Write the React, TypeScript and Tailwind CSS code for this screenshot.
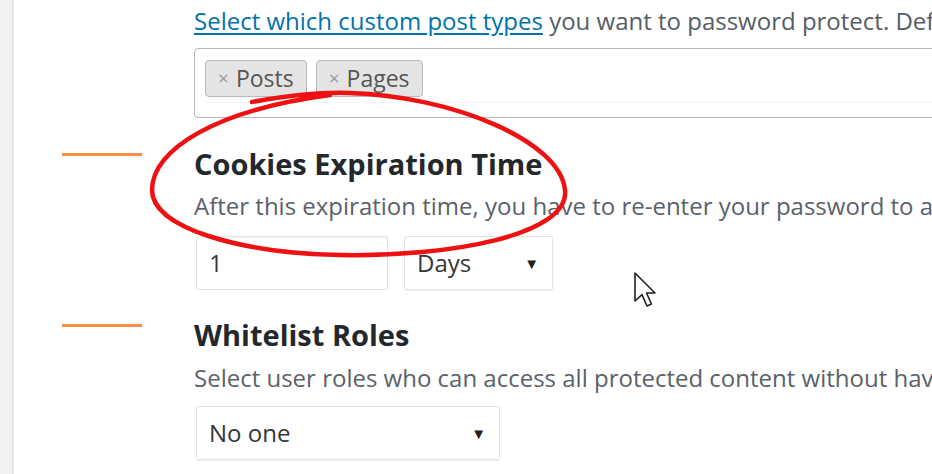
import React from 'react';

const font = { fontFamily: '"Open Sans", "Noto Sans", Arial, sans-serif' };

function OrangeMark(): React.ReactElement {
  return (
    <div className="w-[180px] shrink-0 pt-[6px]">
      <div className="ml-[48px] w-[80px] h-[3px] bg-[#f79046]" />
    </div>
  );
}

function Tag({ label }: { label: string }): React.ReactElement {
  return (
    <div className="h-[37px] flex items-center gap-[7px] px-[12px] rounded-[4px] border border-[#b9b9b9] bg-[#e4e4e4] text-[23px] text-[#555]">
      <span className="text-[#999] text-[19px]">×</span>
      <span>{label}</span>
    </div>
  );
}

function SelectBox({ label, width }: { label: string; width: string }): React.ReactElement {
  return (
    <div
      className={`h-[54px] flex items-center justify-between pl-[12px] pr-[13px] border border-[#e3e3e3] rounded-[2px] shadow-[0_1px_2px_rgba(0,0,0,0.06)] text-[24px] text-[#32373c] ${width}`}
    >
      <span>{label}</span>
      <span className="text-[15px] text-[#222]">▼</span>
    </div>
  );
}

export default function App(): React.ReactElement {
  return (
    <div style={font} className="relative w-[932px] h-[474px] overflow-hidden bg-white flex">
      <div className="w-[14px] shrink-0 bg-[#f1f1f1] border-r-2 border-[#e4e5e8]" />
      <div className="flex-1 whitespace-nowrap">
        <div className="pl-[180px]">
          <div className="mt-[6px] h-[30px] leading-[30px] text-[24px] text-[#555d66]">
            <span className="text-[#0073aa] underline underline-offset-[3px]">Select which custom post types</span>{' '}
            you want to password protect. Default: Pages
          </div>
          <div className="mt-[12px] h-[70px] w-[900px] border border-[#b4b9be] rounded-[4px] relative">
            <div className="flex gap-[9px] pl-[10px] pt-[11px]">
              <Tag label="Posts" />
              <Tag label="Pages" />
            </div>
            <div className="absolute left-[10px] right-0 bottom-[14px] h-px bg-[#f2f2f2]" />
          </div>
        </div>

        <div className="mt-[29px] flex">
          <OrangeMark />
          <h2 className="h-[34px] leading-[34px] text-[29px] font-bold text-[#23282d]">Cookies Expiration Time</h2>
        </div>
        <div className="pl-[180px]">
          <p className="mt-[10px] h-[30px] leading-[30px] text-[24px] text-[#5b6269]">
            After this expiration time, you have to re-enter your password to access protected content.
          </p>
          <div className="mt-[15px] flex gap-[16px] pl-[2px]">
            <div className="w-[192px] h-[54px] flex items-center pl-[12px] border border-[#e3e3e3] rounded-[2px] shadow-[inset_0_1px_2px_rgba(0,0,0,0.05)] text-[24px] text-[#32373c]">
              1
            </div>
            <SelectBox label="Days" width="w-[149px]" />
          </div>
        </div>

        <div className="mt-[28px] flex">
          <OrangeMark />
          <h2 className="h-[34px] leading-[34px] text-[29px] font-bold text-[#23282d]">Whitelist Roles</h2>
        </div>
        <div className="pl-[180px]">
          <p className="mt-[11px] h-[30px] leading-[30px] text-[24px] text-[#5b6269]">
            Select user roles who can access all protected content without having to enter passwords.
          </p>
          <div className="mt-[13px] pl-[2px]">
            <SelectBox label="No one" width="w-[304px]" />
          </div>
        </div>
      </div>

      <svg className="absolute inset-0 pointer-events-none" width="932" height="474" viewBox="0 0 932 474">
        <path
          d="M252 102 C285 96 320 92 350 93 C450 96 560 140 565 190 C570 235 450 257 340 255 C240 253 152 228 152 190 C152 150 215 110 330 95"
          fill="none"
          stroke="#ee1111"
          strokeWidth="4.5"
          strokeLinecap="round"
        />
      </svg>

      <svg className="absolute left-[633px] top-[271px] pointer-events-none" width="28" height="40" viewBox="0 0 14 20">
        <path
          d="M1 1 L1 15 L4.5 11.8 L7 17.5 L9.2 16.5 L6.8 11 L11 11 Z"
          fill="#fff"
          stroke="#222"
          strokeWidth="0.8"
          strokeLinejoin="round"
        />
      </svg>
    </div>
  );
}
